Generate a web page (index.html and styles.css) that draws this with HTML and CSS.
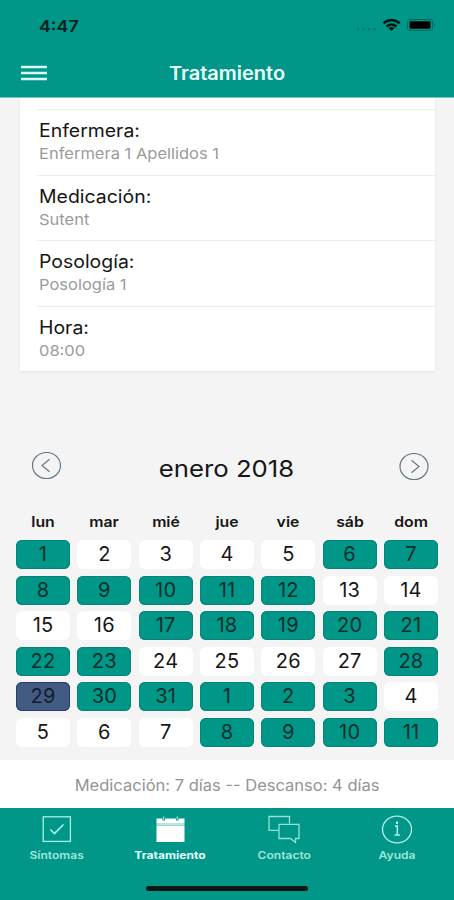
FILE: index.html
```
<!DOCTYPE html>
<html lang="es">
<head>
<meta charset="utf-8">
<title>Tratamiento</title>
<link rel="stylesheet" href="styles.css">
</head>
<body>
<div class="app">
  <header class="header">
    <div class="status">
      <span class="time">4:47</span>
      <svg class="status-icons" width="82" height="20" viewBox="0 0 82 20">
        <g fill="#007b6e"><circle cx="4" cy="14" r="1.3"/><circle cx="9.500" cy="14" r="1.300"/><circle cx="15" cy="14" r="1.300"/><circle cx="20.500" cy="14" r="1.300"/></g>
        <g fill="none" stroke="#001512" stroke-width="2.400"><path d="M29.400 8.200Q37.500 1.800 45.600 8.200"/><path d="M32.400 11.500Q37.500 7.300 42.600 11.500"/></g>
        <path d="M34.500 13Q37.500 11.100 40.500 13L37.500 16Z" fill="#001512"/>
        <rect x="53.500" y="4.500" width="25" height="11" rx="2.500" fill="none" stroke="#00695e"/>
        <rect x="55.500" y="6.300" width="21" height="7.500" rx="1" fill="#000"/>
        <path d="M80 8.300Q82 10 80 11.700Z" fill="#00695e"/>
      </svg>
    </div>
    <div class="navbar">
      <svg class="menu" width="26" height="16" viewBox="0 0 26 16" stroke="#d8f8f3" stroke-width="2.500"><path d="M0 2H26M0 8H26M0 14H26"/></svg>
      <h1>Tratamiento</h1>
    </div>
  </header>
  <main class="content">
    <section class="card">
      <div class="item"><h2>Enfermera:</h2><p>Enfermera 1 Apellidos 1</p></div>
      <div class="item"><h2>Medicación:</h2><p>Sutent</p></div>
      <div class="item"><h2>Posología:</h2><p>Posología 1</p></div>
      <div class="item"><h2>Hora:</h2><p>08:00</p></div>
    </section>
    <section class="calendar">
      <div class="month">
        <svg class="prev" width="30" height="28" viewBox="0 0 30 28" fill="none" stroke="#63798a" stroke-width="1.200"><ellipse cx="15.500" cy="13.500" rx="14" ry="13"/><path d="M18.500 7.300L11 13.500L18.500 19.700"/></svg>
        <h2>enero 2018</h2>
        <svg class="next" width="30" height="28" viewBox="0 0 30 28" fill="none" stroke="#63798a" stroke-width="1.200"><ellipse cx="15" cy="13.500" rx="14" ry="13"/><path d="M12.500 7.300L20 13.500L12.500 19.700"/></svg>
      </div>
      <div class="week"><span>lun</span><span>mar</span><span>mié</span><span>jue</span><span>vie</span><span>sáb</span><span>dom</span></div>
      <div class="days">
        <span class="on">1</span><span>2</span><span>3</span><span>4</span><span>5</span><span class="on">6</span><span class="on">7</span>
        <span class="on">8</span><span class="on">9</span><span class="on">10</span><span class="on">11</span><span class="on">12</span><span>13</span><span>14</span>
        <span>15</span><span>16</span><span class="on">17</span><span class="on">18</span><span class="on">19</span><span class="on">20</span><span class="on">21</span>
        <span class="on">22</span><span class="on">23</span><span>24</span><span>25</span><span>26</span><span>27</span><span class="on">28</span>
        <span class="today">29</span><span class="on">30</span><span class="on">31</span><span class="on">1</span><span class="on">2</span><span class="on">3</span><span>4</span>
        <span>5</span><span>6</span><span>7</span><span class="on">8</span><span class="on">9</span><span class="on">10</span><span class="on">11</span>
      </div>
    </section>
  </main>
  <div class="summary"><span>Medicación: 7 días -- Descanso: 4 días</span></div>
  <nav class="tabs">
    <div class="tab-row">
      <div class="tab"><svg width="32" height="30" viewBox="0 0 32 30" fill="none" stroke="#a9f0e4" stroke-width="1.300"><rect x="2.200" y="2.800" width="27.200" height="24.600"/><path d="M9.300 15.500L13.500 19.500L22.500 10.500" stroke-width="1.700"/></svg><span>Síntomas</span></div>
      <div class="tab active"><svg width="32" height="30" viewBox="0 0 32 30"><path fill="#fff" d="M2.500 4.500H8.500V6.500H11V4.500H22V6.500H24.500V4.500H30.500V9H2.500ZM2.500 11.500H30.500V28H2.500Z"/><path fill="#b9e5df" d="M2.500 9H30.500V11.500H2.500Z"/><path d="M9.700 2.500V5.500M23.200 2.500V5.500" stroke="#d3f5f0"/></svg><span>Tratamiento</span></div>
      <div class="tab"><svg width="32" height="30" viewBox="0 0 32 30" fill="none" stroke="#94e2d6" stroke-width="1.300"><path d="M10.500 16.300H1V2.500H21.500V9.500"/><path d="M11 10.300H31V24.500H27.500V28.500L22.500 24.500H11Z"/></svg><span>Contacto</span></div>
      <div class="tab"><svg width="32" height="30" viewBox="0 0 32 30" fill="none" stroke="#b4eee6" stroke-width="1.300"><ellipse cx="16" cy="15.500" rx="14.500" ry="13.300"/><path d="M14 12H16.300V21M13.500 21H19" stroke-width="1.500"/><circle cx="16" cy="8.800" r="1.200" fill="#d7fff9" stroke="none"/></svg><span>Ayuda</span></div>
    </div>
    <div class="home"></div>
  </nav>
</div>
</body>
</html>
```
FILE: styles.css
```
* { box-sizing: border-box; margin: 0; padding: 0; }
body { font-family: Inter, "Liberation Sans", sans-serif; background: #f4f4f4; color: #161616; }
svg { display: block; flex: none; }
.app { width: 454px; height: 900px; display: flex; flex-direction: column; overflow: hidden; }
.header { height: 98px; background: #009688; border-bottom: 1px solid #74c5bc; flex: none; }
.status { height: 50px; padding: 3px 18px 0 39px; display: flex; align-items: center; justify-content: space-between; }
.status-icons { margin-top: -3px; }
.time { font-size: 16.5px; font-weight: 600; transform: scaleX(1.08); transform-origin: left; margin-top: -1px; color: #00201c; }
.navbar { height: 46px; display: grid; grid-template-columns: 60px 1fr 60px; align-items: center; }
.menu { margin-left: 21px; }
h1 { font-size: 18.5px; line-height: 24px; font-weight: 600; transform: scaleX(1.08); color: #ecfffc; text-align: center; }
.content { height: 662px; flex: none; }
.card { width: 415px; height: 273px; margin-left: 20px; padding: 11px 0 0 17px; background: #fff; box-shadow: 0 1px 2px #e4e4e4; }
.item { height: 65.7px; border-top: 1px solid #ededed; padding: 9px 0 0 2px; }
.item h2 { font-size: 18px; line-height: 23px; font-weight: 400; transform: scaleX(1.08); transform-origin: left; }
.item p { font-size: 15px; line-height: 21px; padding-top: 1px; color: #9b9b9b; transform: scaleX(1.1); transform-origin: left; }
.month { height: 30px; margin: 81px 25px 0 32px; display: flex; align-items: center; justify-content: space-between; }
.month h2 { font-size: 23.5px; line-height: 30px; font-weight: 400; transform: scaleX(1.095); padding: 4px 7px 0 0; }
.prev { margin-top: -2px; margin-left: -1px; }
.next { margin-top: 0; }
.week, .days { display: grid; grid-template-columns: repeat(7, 54px); justify-content: space-between; width: 422px; margin-left: 16px; text-align: center; }
.week { margin-top: 30px; font-size: 14.5px; line-height: 20px; font-weight: 600; }
.week span { transform: scaleX(1.09); }
.days { margin-top: 8px; grid-auto-rows: 29px; row-gap: 6.5px; }
.days span { border-radius: 6px; background: #fff; font-size: 20px; line-height: 29px; letter-spacing: .2px; }
.days .on { background: #009688; color: #042e2a; box-shadow: inset 0 0 0 1px #078477; }
.days .today { background: #415b82; color: #131c2c; box-shadow: inset 0 0 0 1px #293f64; }
.summary { height: 48px; flex: none; display: flex; align-items: center; justify-content: center; background: #fff; color: #949494; font-size: 15.5px; padding-top: 2px; }
.summary span { transform: scaleX(1.065); }
.tabs { height: 92px; flex: none; background: #009688; }
.tab-row { display: flex; height: 78px; padding-top: 6px; }
.tab { flex: 1; display: flex; flex-direction: column; align-items: center; font-size: 10.5px; line-height: 14px; font-weight: 600; color: #9fe6db; }
.tab span { margin-top: 5px; transform: scaleX(1.15); }
.tab.active { color: #e4fffb; font-weight: 700; }
.home { width: 162px; height: 5px; border-radius: 3px; background: #0b1715; margin: 0 auto; }
```
